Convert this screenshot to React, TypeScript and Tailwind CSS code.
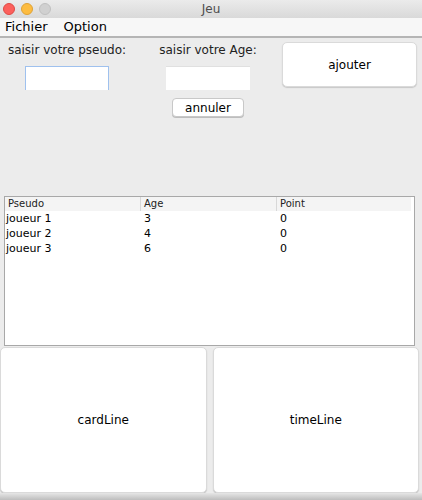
import React from "react";

const font = { fontFamily: '"DejaVu Sans", "Liberation Sans", sans-serif' };

const players = [
  { pseudo: "joueur 1", age: 3, point: 0 },
  { pseudo: "joueur 2", age: 4, point: 0 },
  { pseudo: "joueur 3", age: 6, point: 0 },
];

export default function App() {
  return (
    <div className="w-[422px] h-[500px] bg-[#ececec] flex flex-col overflow-hidden" style={font}>
      {/* Title bar */}
      <div className="relative h-[18px] bg-gradient-to-b from-[#ebebeb] to-[#d9d9d9] flex items-center justify-center shrink-0">
        <div className="absolute left-[3px] top-[3px] flex gap-[6px]">
          <span className="w-[12px] h-[12px] rounded-full bg-[#fc605c] border border-[#de4a45]" />
          <span className="w-[12px] h-[12px] rounded-full bg-[#fdbc40] border border-[#dea236]" />
          <span className="w-[12px] h-[12px] rounded-full bg-[#d0d0d0] border border-[#c0c0c0]" />
        </div>
        <span className="text-[12px] text-[#4d4d4d] leading-none">Jeu</span>
      </div>

      {/* Menu bar */}
      <div className="h-[20px] bg-[#f7f7f7] border-b-2 border-[#b5b5b5] flex items-center gap-[16px] px-[5px] shrink-0">
        <span className="text-[13px] text-black">Fichier</span>
        <span className="text-[13px] text-black">Option</span>
      </div>

      {/* Form area */}
      <div className="h-[158px] flex shrink-0">
        <div className="w-[134px] flex flex-col items-center pt-[5px]">
          <span className="text-[12px] text-[#222] leading-[15px]">saisir votre pseudo:</span>
          <div className="mt-[8px] w-[84px] h-[24px] bg-white border border-[#9fc1ee] border-b-0" />
        </div>
        <div className="w-[148px] flex flex-col items-center pt-[5px]">
          <span className="text-[12px] text-[#222] leading-[15px]">saisir votre Age:</span>
          <div className="mt-[8px] w-[84px] h-[24px] bg-white border-t border-[#e0e0e0]" />
          <button className="mt-[8px] w-[72px] h-[19px] bg-white rounded-[4px] border border-[#c8c8c8] shadow-[0_1px_0_#bdbdbd] text-[12px] text-black leading-none">
            annuler
          </button>
        </div>
        <div className="pt-[4px]">
          <button className="w-[135px] h-[45px] bg-white rounded-[5px] border border-[#dadada] shadow-[0_1px_1px_#c8c8c8] text-[12px] text-black">
            ajouter
          </button>
        </div>
      </div>

      {/* Table */}
      <div className="mx-[4px] mr-[7px] h-[150px] bg-white border border-[#a8a8a8] flex flex-col shrink-0">
        <div className="h-[14px] bg-[#f4f4f4] grid grid-cols-[136px_136px_1fr] text-[10px] text-[#222] leading-[14px] mr-[3px]">
          <span className="pl-[3px] border-r border-[#d8d8d8]">Pseudo</span>
          <span className="pl-[3px] border-r border-[#d8d8d8]">Age</span>
          <span className="pl-[3px]">Point</span>
        </div>
        {players.map((p) => (
          <div key={p.pseudo} className="h-[15px] grid grid-cols-[136px_136px_1fr] text-[11px] text-black leading-[15px]">
            <span className="pl-[1px]">{p.pseudo}</span>
            <span className="pl-[3px]">{p.age}</span>
            <span className="pl-[3px]">{p.point}</span>
          </div>
        ))}
      </div>

      {/* Bottom buttons */}
      <div className="flex gap-[6px] pt-[1px] pr-[3px] h-[147px] shrink-0">
        <button className="flex-1 bg-white rounded-[5px] border border-[#dadada] shadow-[0_1px_1px_#c4c4c4] text-[12px] text-black">
          cardLine
        </button>
        <button className="flex-1 bg-white rounded-[5px] border border-[#dadada] shadow-[0_1px_1px_#c4c4c4] text-[12px] text-black">
          timeLine
        </button>
      </div>
      <div className="flex-1 bg-gradient-to-b from-[#e6e6e6] to-[#bdbdbd]" />
    </div>
  );
}
